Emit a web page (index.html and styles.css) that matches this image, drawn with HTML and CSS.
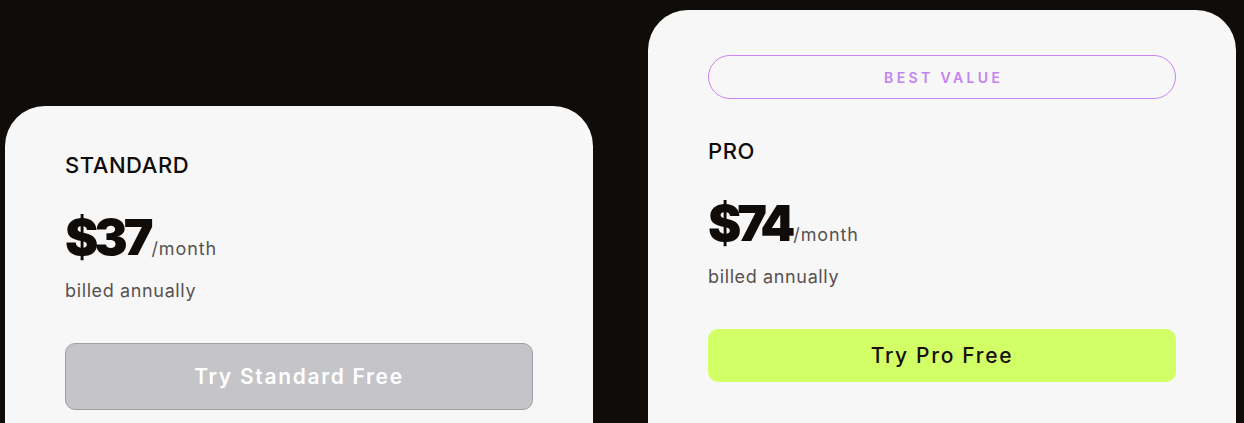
FILE: index.html
```html
<!DOCTYPE html>
<html lang="en">
<head>
<meta charset="utf-8">
<title>Pricing</title>
<link rel="stylesheet" href="styles.css">
</head>
<body>
<main class="plans">
  <section class="card card-standard">
    <h2 class="plan-name">STANDARD</h2>
    <div class="price"><span class="amount">$37</span><span class="period">/month</span></div>
    <p class="billing">billed annually</p>
    <a class="btn btn-standard" href="#">Try Standard Free</a>
  </section>
  <section class="card card-pro">
    <div class="badge">BEST VALUE</div>
    <h2 class="plan-name">PRO</h2>
    <div class="price"><span class="amount">$74</span><span class="period">/month</span></div>
    <p class="billing">billed annually</p>
    <a class="btn btn-pro" href="#">Try Pro Free</a>
  </section>
</main>
</body>
</html>
```

FILE: styles.css
```css
html, body {
  margin: 0;
  padding: 0;
}
body {
  background: #0f0c09;
  height: 423px;
  overflow: hidden;
  font-family: Inter, "Liberation Sans", sans-serif;
  color: #100c09;
}
.plans {
  display: flex;
  align-items: flex-start;
  gap: 55px;
  padding-left: 5px;
}
.card {
  box-sizing: border-box;
  width: 588px;
  height: 600px;
  background: #f7f7f7;
  border-radius: 40px;
  padding: 45px 60px;
  display: flex;
  flex-direction: column;
}
.card-standard {
  margin-top: 106px;
}
.card-pro {
  margin-top: 10px;
}
.badge {
  box-sizing: border-box;
  height: 44px;
  border: 1px solid #c985f2;
  border-radius: 999px;
  display: flex;
  align-items: center;
  justify-content: center;
  color: #c383ef;
  font-size: 14px;
  font-weight: 600;
  letter-spacing: 0.24em;
  padding-left: 0.24em;
  margin-bottom: 38px;
}
.plan-name {
  margin: 0;
  font-size: 22px;
  line-height: 28px;
  font-weight: 500;
  letter-spacing: 0.025em;
}
.price {
  display: flex;
  align-items: baseline;
  margin-top: 33px;
  line-height: 50px;
}
.amount {
  font-size: 50px;
  font-weight: 900;
  letter-spacing: -0.08em;
}
.period {
  font-size: 18px;
  line-height: 1;
  color: #57524f;
  margin-left: 2px;
  letter-spacing: 0.05em;
}
.billing {
  margin: 16px 0 0;
  font-size: 18px;
  line-height: 26px;
  color: #57524f;
  letter-spacing: 0.035em;
}
.btn {
  box-sizing: border-box;
  display: flex;
  align-items: center;
  justify-content: center;
  border-radius: 10px;
  text-decoration: none;
  font-size: 21px;
  letter-spacing: 0.08em;
  margin-top: 39px;
}
.btn-standard {
  height: 67px;
  background: #c5c4c8;
  border: 1px solid #a09fa5;
  color: #ffffff;
  font-weight: 600;
}
.btn-pro {
  height: 53px;
  background: #d3ff66;
  color: #15100c;
  font-weight: 500;
}
```
